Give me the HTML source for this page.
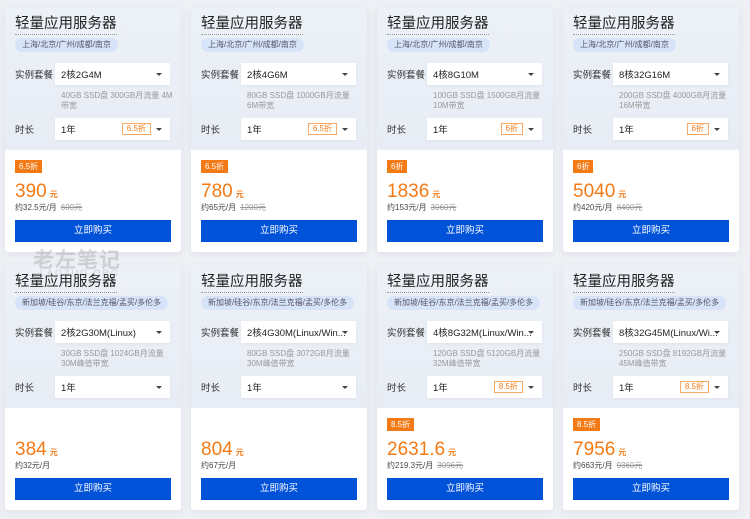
<!DOCTYPE html><html><head><meta charset="utf-8"><style>
*{margin:0;padding:0;box-sizing:border-box}
body{width:750px;height:519px;background:#eef0f5;font-family:"Liberation Sans","Noto Sans CJK SC",sans-serif;position:relative;overflow:hidden;color:#333}
.card{position:absolute;width:176px;height:245px;background:#fff;border-radius:3px;box-shadow:0 2px 8px rgba(50,60,90,.08);overflow:hidden}
.top{position:absolute;left:0;top:0;width:176px;height:143px;background:linear-gradient(180deg,#ecf0f7,#e8edf5)}
.t{position:absolute;left:10px;top:8px;font-size:14.5px;color:#222;border-bottom:1px dotted #999;line-height:18px;height:20px}
.tag{position:absolute;left:10px;top:31px;height:14px;padding:0 7px;border-radius:7px;background:#d6e3f8;font-size:8px;line-height:14px;color:#556}
.lab{position:absolute;left:10px;height:22px;display:flex;align-items:center;padding-top:4px;font-size:9.5px;color:#333;line-height:1}
.sel{position:absolute;left:50px;width:115px;height:22px;background:#fff;font-size:9.5px;line-height:1;padding-left:6px;padding-top:4px;color:#222;box-shadow:0 1px 3px rgba(0,0,0,.05);display:flex;align-items:center}
.sel:after{content:"";position:absolute;right:8px;top:10px;border:3px solid transparent;border-top:3px solid #444;border-bottom:0}
.d{position:absolute;left:56px;top:84px;width:114px;font-size:8px;color:#999;line-height:10px}
.dc{position:absolute;right:19px;top:5px;height:12px;padding:0 4px;border:1px solid #f9a963;font-size:8px;line-height:10px;color:#f47a16}
.badge{position:absolute;left:10px;top:153px;height:13px;padding:0 4px;background:#f47a16;color:#fff;font-size:8px;line-height:13px}
.p{position:absolute;left:10px;top:174px;font-size:19px;color:#f47a16;line-height:22px}
.p small{font-size:8px;font-weight:bold;margin-left:3px}
.s{position:absolute;left:10px;top:196px;font-size:8px;color:#444;line-height:10px}
.s del{color:#999;margin-left:4px}
.b{position:absolute;left:10px;top:213px;width:156px;height:22px;background:#0052d9;color:#fff;font-size:9.5px;line-height:22px;text-align:center}
.wm{position:absolute;left:33px;top:244px;font-size:21px;font-weight:bold;color:rgba(150,150,150,.35);letter-spacing:1px}
.wm2{position:absolute;left:40px;top:268px;font-size:9px;color:rgba(150,150,150,.35);letter-spacing:2px}
</style></head><body>

<div class="card" style="left:5px;top:7px"><div class="top"></div><div class="t">轻量应用服务器</div><div class="tag">上海/北京/广州/成都/南京</div>
<div class="lab" style="top:56px">实例套餐</div><div class="sel" style="top:56px">2核2G4M</div><div class="d">40GB SSD盘 300GB月流量 4M带宽</div>
<div class="lab" style="top:111px">时长</div><div class="sel" style="top:111px">1年<span class="dc">6.5折</span></div>
<div class="badge">6.5折</div><div class="p">390<small>元</small></div><div class="s">约32.5元/月<del>600元</del></div><div class="b">立即购买</div></div>

<div class="card" style="left:191px;top:7px"><div class="top"></div><div class="t">轻量应用服务器</div><div class="tag">上海/北京/广州/成都/南京</div>
<div class="lab" style="top:56px">实例套餐</div><div class="sel" style="top:56px">2核4G6M</div><div class="d">80GB SSD盘 1000GB月流量 6M带宽</div>
<div class="lab" style="top:111px">时长</div><div class="sel" style="top:111px">1年<span class="dc">6.5折</span></div>
<div class="badge">6.5折</div><div class="p">780<small>元</small></div><div class="s">约65元/月<del>1200元</del></div><div class="b">立即购买</div></div>

<div class="card" style="left:377px;top:7px"><div class="top"></div><div class="t">轻量应用服务器</div><div class="tag">上海/北京/广州/成都/南京</div>
<div class="lab" style="top:56px">实例套餐</div><div class="sel" style="top:56px">4核8G10M</div><div class="d">100GB SSD盘 1500GB月流量 10M带宽</div>
<div class="lab" style="top:111px">时长</div><div class="sel" style="top:111px">1年<span class="dc">6折</span></div>
<div class="badge">6折</div><div class="p">1836<small>元</small></div><div class="s">约153元/月<del>3060元</del></div><div class="b">立即购买</div></div>

<div class="card" style="left:563px;top:7px"><div class="top"></div><div class="t">轻量应用服务器</div><div class="tag">上海/北京/广州/成都/南京</div>
<div class="lab" style="top:56px">实例套餐</div><div class="sel" style="top:56px">8核32G16M</div><div class="d">200GB SSD盘 4000GB月流量 16M带宽</div>
<div class="lab" style="top:111px">时长</div><div class="sel" style="top:111px">1年<span class="dc">6折</span></div>
<div class="badge">6折</div><div class="p">5040<small>元</small></div><div class="s">约420元/月<del>8400元</del></div><div class="b">立即购买</div></div>

<div class="card" style="left:5px;top:265px"><div class="top"></div><div class="t">轻量应用服务器</div><div class="tag">新加坡/硅谷/东京/法兰克福/孟买/多伦多</div>
<div class="lab" style="top:56px">实例套餐</div><div class="sel" style="top:56px">2核2G30M(Linux)</div><div class="d">30GB SSD盘 1024GB月流量 30M峰值带宽</div>
<div class="lab" style="top:111px">时长</div><div class="sel" style="top:111px">1年</div>
<div class="p">384<small>元</small></div><div class="s">约32元/月</div><div class="b">立即购买</div></div>

<div class="card" style="left:191px;top:265px"><div class="top"></div><div class="t">轻量应用服务器</div><div class="tag">新加坡/硅谷/东京/法兰克福/孟买/多伦多</div>
<div class="lab" style="top:56px">实例套餐</div><div class="sel" style="top:56px">2核4G30M(Linux/Win...</div><div class="d">80GB SSD盘 3072GB月流量 30M峰值带宽</div>
<div class="lab" style="top:111px">时长</div><div class="sel" style="top:111px">1年</div>
<div class="p">804<small>元</small></div><div class="s">约67元/月</div><div class="b">立即购买</div></div>

<div class="card" style="left:377px;top:265px"><div class="top"></div><div class="t">轻量应用服务器</div><div class="tag">新加坡/硅谷/东京/法兰克福/孟买/多伦多</div>
<div class="lab" style="top:56px">实例套餐</div><div class="sel" style="top:56px">4核8G32M(Linux/Win...</div><div class="d">120GB SSD盘 5120GB月流量 32M峰值带宽</div>
<div class="lab" style="top:111px">时长</div><div class="sel" style="top:111px">1年<span class="dc">8.5折</span></div>
<div class="badge">8.5折</div><div class="p">2631.6<small>元</small></div><div class="s">约219.3元/月<del>3096元</del></div><div class="b">立即购买</div></div>

<div class="card" style="left:563px;top:265px"><div class="top"></div><div class="t">轻量应用服务器</div><div class="tag">新加坡/硅谷/东京/法兰克福/孟买/多伦多</div>
<div class="lab" style="top:56px">实例套餐</div><div class="sel" style="top:56px">8核32G45M(Linux/Wi...</div><div class="d">250GB SSD盘 8192GB月流量 45M峰值带宽</div>
<div class="lab" style="top:111px">时长</div><div class="sel" style="top:111px">1年<span class="dc">8.5折</span></div>
<div class="badge">8.5折</div><div class="p">7956<small>元</small></div><div class="s">约663元/月<del>9360元</del></div><div class="b">立即购买</div></div>

<div class="wm">老左笔记</div><div class="wm2">LAOZUO.ORG</div>
</body></html>
